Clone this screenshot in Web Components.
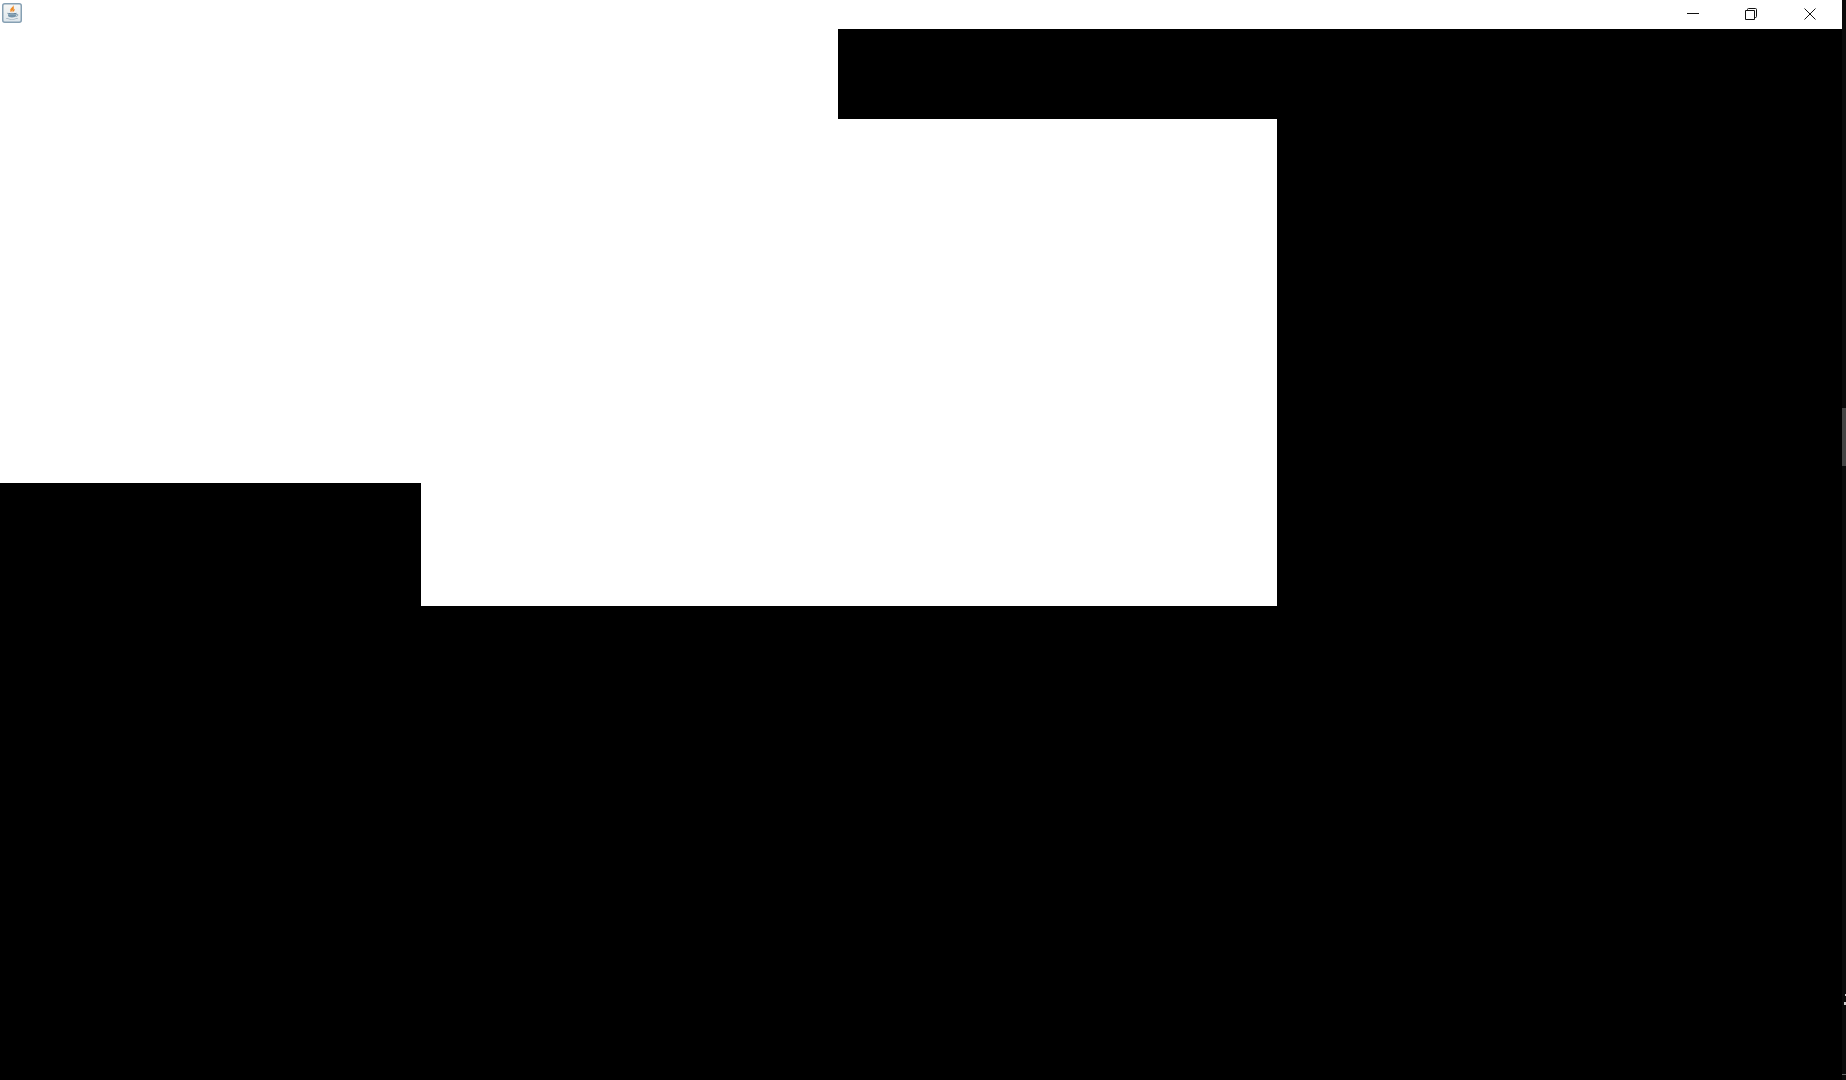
<!DOCTYPE html>
<html>
<head>
<meta charset="utf-8">
<title>Java window</title>
<style>
html, body { margin: 0; height: 100%; background: #000; overflow: hidden; }
</style>
</head>
<body>
<app-window>
  <title-bar>
    <java-icon slot="icon"></java-icon>
    <window-button kind="min"></window-button>
    <window-button kind="restore"></window-button>
    <window-button kind="close"></window-button>
  </title-bar>
  <paint-canvas></paint-canvas>
  <edge-strip slot="edge"></edge-strip>
</app-window>

<script>
//outer window: main column plus the thin strip down the right side
class AppWindow extends HTMLElement {
  constructor(){
    super();
    this.attachShadow({mode: 'open'});
  }
  connectedCallback(){
    this.shadowRoot.innerHTML = `
    <style>
      :host { display: flex; width: 1846px; height: 1080px; background: #000; }
      .main { flex: 1; min-width: 0; display: flex; flex-direction: column; }
    </style>
    <div class="main"><slot></slot></div>
    <slot name="edge"></slot>
    `;
  }
}

class TitleBar extends HTMLElement {
  constructor(){
    super();
    this.attachShadow({mode: 'open'});
  }
  connectedCallback(){
    this.shadowRoot.innerHTML = `
    <style>
      :host { display: flex; flex: none; height: 29px; background: #fff; align-items: stretch; padding-right: 3px; }
      .icon { display: flex; flex: 1; align-items: flex-start; padding: 3px 0 0 2px; }
    </style>
    <div class="icon"><slot name="icon"></slot></div>
    <slot></slot>
    `;
  }
}

class JavaIcon extends HTMLElement {
  constructor(){
    super();
    this.attachShadow({mode: 'open'});
  }
  connectedCallback(){
    this.shadowRoot.innerHTML = `
    <style>
      :host { display: block; width: 20px; height: 20px; }
      svg { display: block; }
    </style>
    <svg width="20" height="20" viewBox="0 0 20 20">
      <defs>
        <linearGradient id="bg" x1="0" y1="0" x2="0" y2="1">
          <stop offset="0" stop-color="#f7f7f5"/>
          <stop offset="1" stop-color="#dde6ec"/>
        </linearGradient>
      </defs>
      <rect x="0.75" y="0.75" width="18.5" height="18.5" rx="2" fill="url(#bg)" stroke="#86a0b3" stroke-width="1.5"/>
      <path d="M11 2c.6 2-2.800 3.200-2.800 5.300 0 .9.500 1.500 1.100 2.100-.2-1 .4-1.600 1.300-2.200.2.600.1 1.400-.3 2.100 1.300-.6 2.800-1.900 2.400-3.600-.3.500-.7.800-1.100 1 .5-1.600.3-3.400-.6-4.700z" fill="#ee8a26"/>
      <path d="M8.800 5.800c-.6 1-.9 1.900-.4 3l1-.6c-.4-.8-.5-1.500-.6-2.400z" fill="#f5b070"/>
      <path d="M5.500 9.800c1.800.6 7.200.6 9 0v.9c-1.800.6-7.200.6-9 0z" fill="#64849c"/>
      <path d="M6 11.200h8v1.400c0 1.200-1.500 1.900-4 1.900s-4-.7-4-1.900z" fill="#7594aa"/>
      <path d="M14 11.400c1.500-.3 2.300.2 1.900 1-.3.600-1.200.9-2.400 1" fill="none" stroke="#7594aa" stroke-width=".8"/>
      <path d="M3.800 15.300c2.800 1.100 9.600 1.100 12.400 0-.4 1.500-12 1.500-12.400 0z" fill="#56758e"/>
    </svg>
    `;
  }
}

//minimise, restore, close, drawn the way windows 10 draws them
class WindowButton extends HTMLElement {
  constructor(){
    super();
    this.attachShadow({mode: 'open'});
  }
  connectedCallback(){
    const glyphs = {
      min: '<path d="M0 5.500h12" />',
      restore: '<path d="M.5 2.500h9v9h-9z M2.500 2.500V1.500a1 1 0 0 1 1-1h7a1 1 0 0 1 1 1v7a1 1 0 0 1-1 1h-1" />',
      close: '<path d="M.5 .5l11 11 M11.500 .5l-11 11" />'
    };
    const kind = this.getAttribute('kind');
    this.shadowRoot.innerHTML = `
    <style>
      :host { display: flex; flex: none; width: 58.5px; justify-content: center; padding-top: 8px; box-sizing: border-box; }
      svg { display: block; fill: none; stroke: #111; stroke-width: 1; }
    </style>
    <svg width="12" height="12" viewBox="0 0 12 12">${glyphs[kind]}</svg>
    `;
  }
}

//the drawing area: white blocks on black, the shape is the content
class PaintCanvas extends HTMLElement {
  constructor(){
    super();
    this.attachShadow({mode: 'open'});
  }
  connectedCallback(){
    this.shadowRoot.innerHTML = `
    <style>
      :host {
        display: grid; flex: 1; background: #000;
        grid-template-columns: 421px 417px 439px 1fr;
        grid-template-rows: 90px 364px 123px 1fr;
      }
      div { background: #fff; }
      .a { grid-column: 1 / 3; grid-row: 1 / 3; }
      .b { grid-column: 3; grid-row: 2 / 4; }
      .c { grid-column: 2; grid-row: 3; }
    </style>
    <div class="a"></div>
    <div class="b"></div>
    <div class="c"></div>
    `;
  }
}

//thin scrollbar-like strip, thumb and specks sit on top of it
class EdgeStrip extends HTMLElement {
  constructor(){
    super();
    this.attachShadow({mode: 'open'});
  }
  connectedCallback(){
    this.shadowRoot.innerHTML = `
    <style>
      :host { display: block; flex: none; position: relative; width: 4px; height: 1080px; background: #0a0a0a; }
      i { position: absolute; right: 0; display: block; }
      .thumb { top: 408px; height: 58px; width: 4px; background: #444; }
      .s1 { top: 994px; height: 2px; width: 1px; background: #ccc; }
      .s2 { top: 1002px; height: 3px; width: 2px; background: #ccc; }
      .line { top: 1074px; height: 1px; width: 4px; background: #666; }
    </style>
    <i class="thumb"></i>
    <i class="s1"></i>
    <i class="s2"></i>
    <i class="line"></i>
    `;
  }
}

customElements.define('app-window', AppWindow);
customElements.define('title-bar', TitleBar);
customElements.define('java-icon', JavaIcon);
customElements.define('window-button', WindowButton);
customElements.define('paint-canvas', PaintCanvas);
customElements.define('edge-strip', EdgeStrip);
</script>
</body>
</html>
